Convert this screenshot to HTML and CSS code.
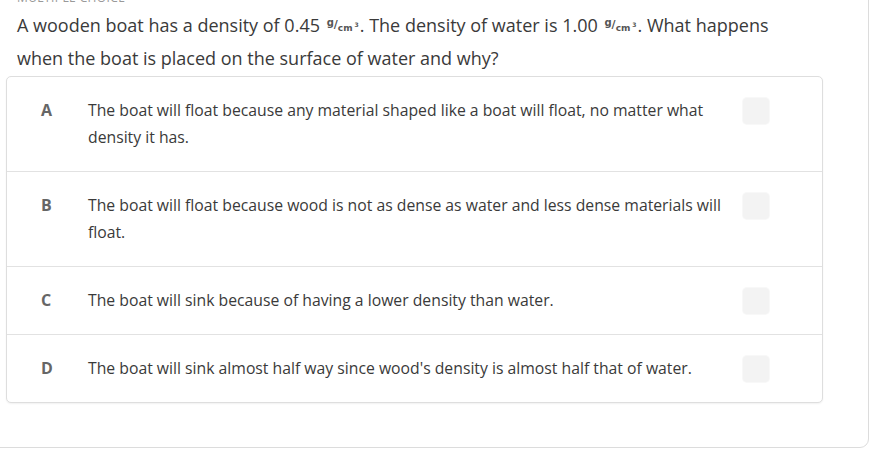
FILE: index.html
```html
<!DOCTYPE html>
<html lang="en">
<head>
<meta charset="utf-8">
<title>Question</title>
<link rel="stylesheet" href="styles.css">
</head>
<body>
<div class="panel">
  <div class="label">MULTIPLE CHOICE</div>
  <p class="question">A wooden boat has a density of 0.45 <span class="unit"><span class="num">g</span><span class="slash">/</span><span class="den">cm</span><span class="cube">3</span></span>. The density of water is 1.00 <span class="unit"><span class="num">g</span><span class="slash">/</span><span class="den">cm</span><span class="cube">3</span></span>. What happens when the boat is placed on the surface of water and why?</p>
  <div class="options">
    <div class="option">
      <span class="letter">A</span>
      <span class="text">The boat will float because any material shaped like a boat will float, no matter what density it has.</span>
      <span class="box"></span>
    </div>
    <div class="option">
      <span class="letter">B</span>
      <span class="text">The boat will float because wood is not as dense as water and less dense materials will float.</span>
      <span class="box"></span>
    </div>
    <div class="option">
      <span class="letter">C</span>
      <span class="text">The boat will sink because of having a lower density than water.</span>
      <span class="box"></span>
    </div>
    <div class="option">
      <span class="letter">D</span>
      <span class="text">The boat will sink almost half way since wood's density is almost half that of water.</span>
      <span class="box"></span>
    </div>
  </div>
</div>
</body>
</html>
```

FILE: styles.css
```css
html, body {
  margin: 0;
  padding: 0;
  background: #fff;
  overflow: hidden;
}
body {
  font-family: "Open Sans", "Noto Sans", sans-serif;
  color: #333;
}
.panel {
  margin: -10px 1px 0 -10px;
  padding: 0 45px 44px 15px;
  border: 1px solid #dcdcdc;
  border-radius: 9px;
  background: #fff;
}
.label {
  font-size: 12px;
  line-height: 14px;
  color: #999;
  letter-spacing: 0.4px;
  padding-left: 11px;
  height: 13px;
  overflow: hidden;
}
.question {
  margin: 0 0 1px 0;
  padding: 5px 45px 0 11px;
  font-size: 18px;
  line-height: 33px;
  color: #3a3a3a;
}
.unit {
  display: inline-flex;
  align-items: flex-start;
  height: 14px;
  vertical-align: 6px;
  margin: 0 1px 0 2px;
  font-family: "DejaVu Sans", sans-serif;
  font-weight: bold;
  color: #555;
  line-height: 10px;
}
.unit .num {
  font-size: 10px;
  margin-top: -1px;
}
.unit .slash {
  font-size: 11px;
  margin-top: 1px;
}
.unit .den {
  font-size: 9px;
  margin-top: 4px;
}
.unit .cube {
  font-size: 6px;
  line-height: 6px;
  margin-top: 3px;
  margin-left: 2px;
}
.options {
  border: 1px solid #dedede;
  border-radius: 5px;
  box-shadow: 0 1px 2px rgba(0,0,0,0.06);
  background: #fff;
}
.option {
  display: flex;
  align-items: flex-start;
  padding: 20px 53px 20px 0;
  border-top: 1px solid #e2e2e2;
}
.option:first-child {
  border-top: none;
}
.letter {
  width: 81px;
  flex: none;
  padding-left: 34px;
  box-sizing: border-box;
  font-size: 16px;
  line-height: 27px;
  font-weight: bold;
  color: #666;
}
.text {
  flex: 1;
  font-size: 15.75px;
  line-height: 27px;
  color: #3a3a3a;
  padding-right: 8px;
}
.box {
  flex: none;
  width: 26px;
  height: 26px;
  margin-top: 1px;
  border-radius: 4px;
  background: #f3f3f3;
  box-shadow: 0 0 0 1px #f8f8f8;
}
```
